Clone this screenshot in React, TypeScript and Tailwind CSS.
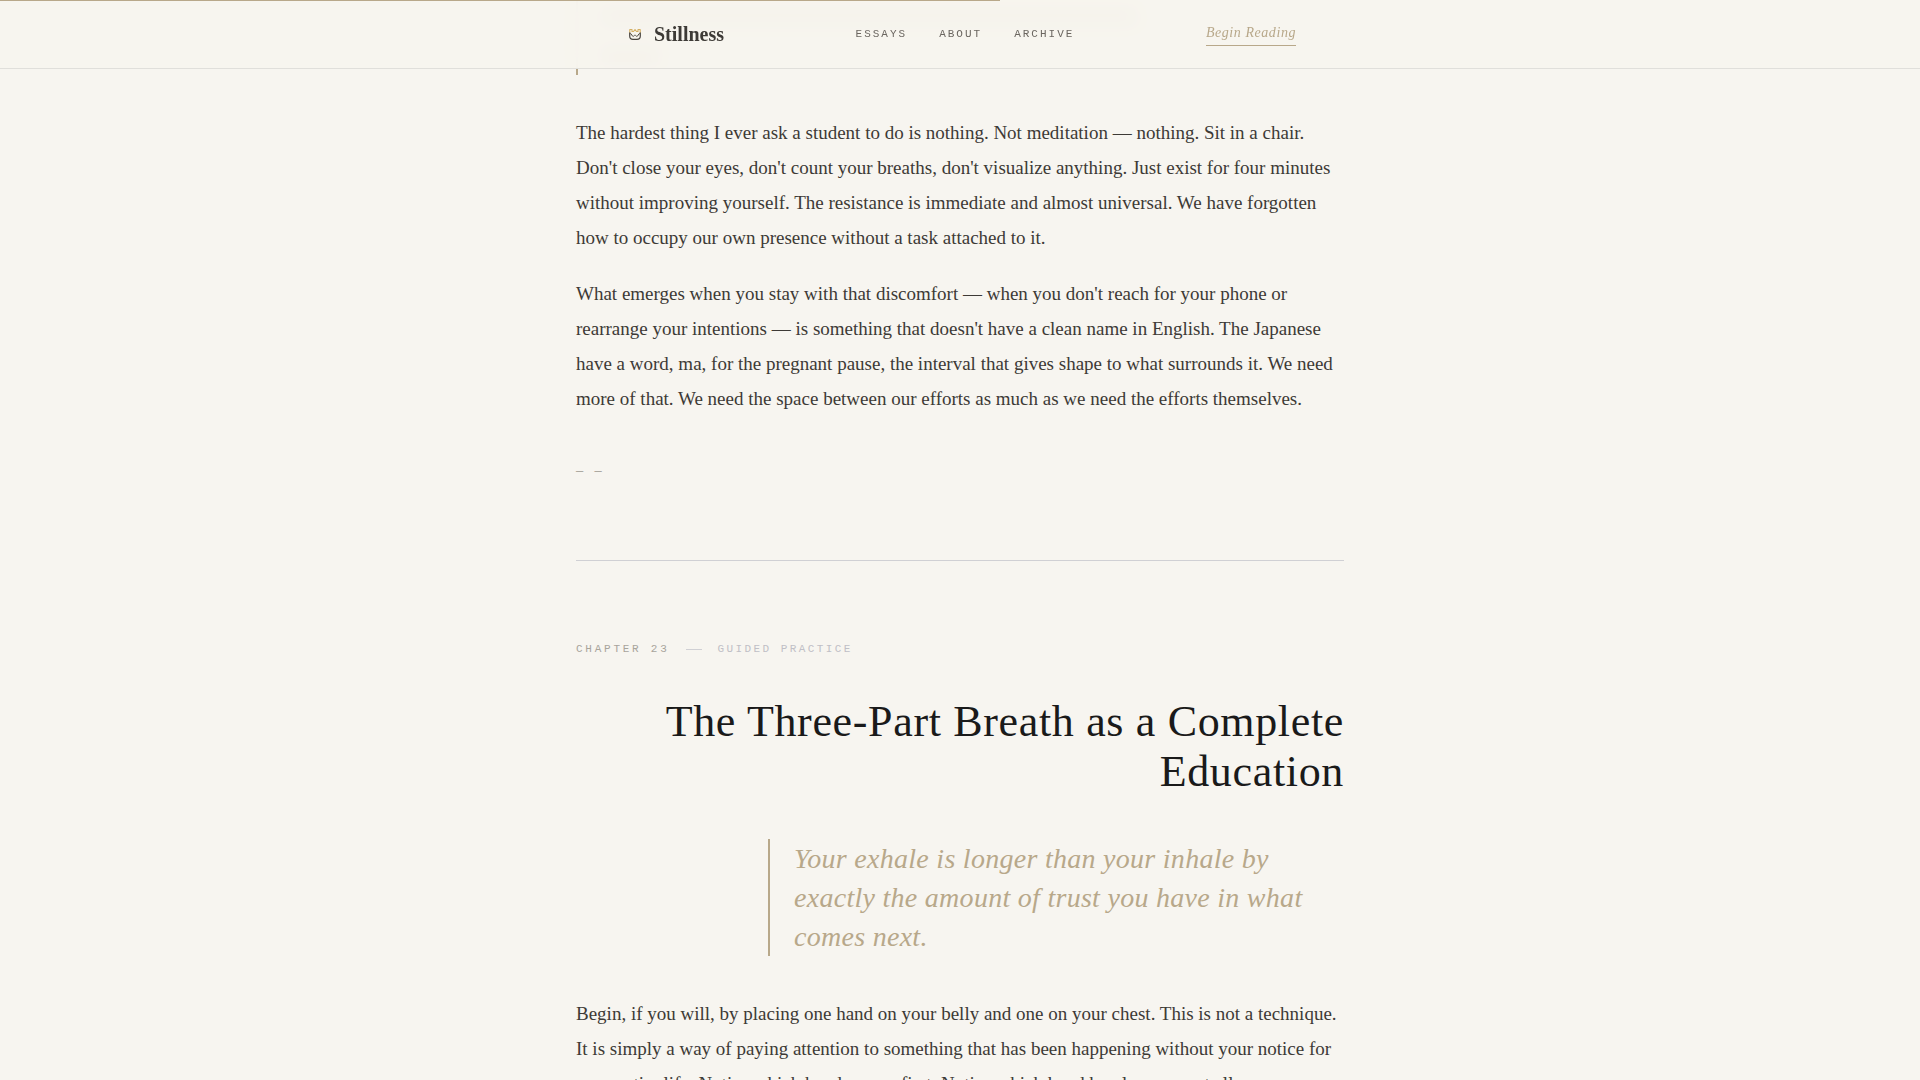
const navLinks = ['Essays', 'About', 'Archive'];

const stillnessParagraphs = [
  "The hardest thing I ever ask a student to do is nothing. Not meditation — nothing. Sit in a chair. Don't close your eyes, don't count your breaths, don't visualize anything. Just exist for four minutes without improving yourself. The resistance is immediate and almost universal. We have forgotten how to occupy our own presence without a task attached to it.",
  "What emerges when you stay with that discomfort — when you don't reach for your phone or rearrange your intentions — is something that doesn't have a clean name in English. The Japanese have a word, ma, for the pregnant pause, the interval that gives shape to what surrounds it. We need more of that. We need the space between our efforts as much as we need the efforts themselves.",
];

const breathParagraph =
  'Begin, if you will, by placing one hand on your belly and one on your chest. This is not a technique. It is simply a way of paying attention to something that has been happening without your notice for your entire life. Notice which hand moves first. Notice which hand barely moves at all.';

function Logo() {
  return (
    <svg viewBox="0 0 22 22" className="h-[22px] w-[22px]" fill="none" strokeLinejoin="round" aria-hidden="true">
      <path d="M5.800 10V6.500H8v2h1.500l1.500-2 1.500 2H14v-2h2.200V10" stroke="#d4af62" strokeWidth="1.100" />
      <path d="M5.700 9.500v3.500c0 2.200 1.300 3.300 3.300 3.300h4c2 0 3.300-1.100 3.300-3.300V9.500" stroke="#4a4640" strokeWidth="1.200" />
      <path d="M6 10.500c2 0 1.800 3 3.200 3 .9 0 .8-1.500 1.800-1.500s.9 1.500 1.800 1.500c1.400 0 1.200-3 3.200-3" stroke="#5a554d" />
    </svg>
  );
}

function Header() {
  return (
    <header className="fixed inset-x-0 top-0 z-10 border-b border-[#e0dfdb] bg-[#f7f4ee]/95 backdrop-blur-sm">
      <div className="absolute left-0 top-0 h-px w-[52.1%] bg-[#b8a88a]" />
      <div className="mx-auto flex h-17 max-w-3xl items-center justify-between px-12">
        <a href="#top" className="flex items-center gap-2">
          <Logo />
          <span className="text-xl font-bold text-[#3d3a36]">Stillness</span>
        </a>
        <nav className="flex gap-8">
          {navLinks.map((label) => (
            <a
              key={label}
              href={`#${label.toLowerCase()}`}
              className="font-['Liberation_Mono',monospace] text-[11px] uppercase tracking-[2px] text-[#6b6660]"
            >
              {label}
            </a>
          ))}
        </nav>
        <a
          href="#reading"
          className="border-b border-[#b8a88a] pb-0.5 text-sm italic tracking-[0.04em] text-[#b8a88a]"
        >
          Begin Reading
        </a>
      </div>
    </header>
  );
}

function Paragraph({ children }: { children: string }) {
  return <p className="mb-[21px] text-[19px] leading-[35px] text-[#3d3a36]">{children}</p>;
}

export default function App() {
  return (
    <div className="h-screen overflow-hidden bg-[#f7f5f0] font-['Liberation_Serif',serif]">
      <Header />
      <main className="mx-auto max-w-3xl">
        <section className="border-b border-[#d0d0d4] pb-20">
          {/* tail of the previous quote, showing softly through the header */}
          <div className="mb-10 h-[75px] space-y-6 border-l-2 border-[#b8a88a] pl-6 pt-2.5">
            <div className="h-3.5 w-[72%] bg-[#b8a88a]/60" />
            <div className="h-3.5 w-14 bg-[#b8a88a]/60" />
          </div>
          {stillnessParagraphs.map((text) => (
            <Paragraph key={text}>{text}</Paragraph>
          ))}
          <div className="mt-12 font-['Liberation_Mono',monospace] text-xs tracking-[2px] text-[#a8a49c]">
            — —
          </div>
        </section>

        <section className="pt-20">
          <div className="flex items-center gap-4 font-['Liberation_Mono',monospace] text-[11px] uppercase leading-4">
            <span className="tracking-[0.25em] text-[#a8a49c]">Chapter 23</span>
            <span className="h-px w-4 bg-[#d0d0d4]" />
            <span className="tracking-[0.22em] text-[#c0bfc6]">Guided Practice</span>
          </div>
          <h2 className="mt-10 text-right text-[44px] leading-[50px] tracking-[0.015em] text-[#1a1a1a]">
            The Three-Part Breath as a Complete Education
          </h2>
          <blockquote className="mb-10 ml-48 mt-[42px] border-l-2 border-[#b8a88a] pl-6 text-[28px] italic leading-[39px] tracking-[0.01em] text-[#b8a88a]">
            Your exhale is longer than your inhale by exactly the amount of trust you have in what comes next.
          </blockquote>
          <Paragraph>{breathParagraph}</Paragraph>
        </section>
      </main>
    </div>
  );
}
